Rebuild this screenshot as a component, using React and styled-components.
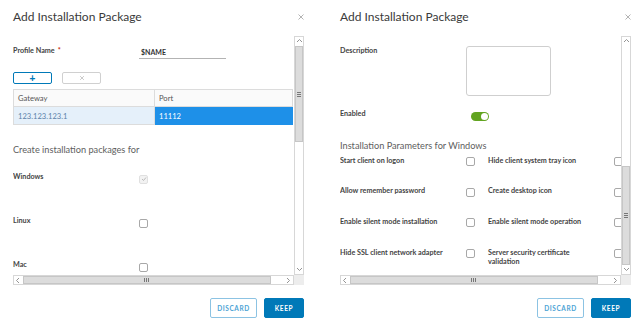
import React from 'react';
import styled, { createGlobalStyle } from 'styled-components';

const GlobalStyle = createGlobalStyle`
  body {
    margin: 0;
    background: #fff;
    font-family: Lato, "Open Sans", sans-serif;
    color: #333;
    overflow: hidden;
  }
`;

const Page = styled.div`
  display: flex;
  gap: 10px;
  width: max-content;
`;

const Dialog = styled.section`
  width: 291px;
  padding: 0 13px;
  display: flex;
  flex-direction: column;
`;

const Header = styled.header`
  height: 33px;
  padding-bottom: 3px;
  display: flex;
  align-items: center;
  justify-content: space-between;
`;

const Title = styled.h3`
  margin: 0;
  font-size: 12px;
  font-weight: 400;
  color: #3a3a3a;
  line-height: 14px;
`;

const Close = styled.button`
  border: 0;
  background: none;
  padding: 0;
  margin-right: -1px;
  width: 8px;
  height: 8px;
  display: flex;
  color: #aaa;
`;

const Frame = styled.div`
  display: grid;
  grid-template-columns: 281px 10px;
  grid-template-rows: 239px 10px;
`;

const Viewport = styled.div`
  overflow: hidden;
  position: relative;
`;

const Content = styled.div`
  padding-top: 10px;
  width: ${(p) => p.$width || 'auto'};
`;

const Bar = styled.div`
  display: flex;
  flex-direction: ${(p) => (p.$vertical ? 'column' : 'row')};
  background: #fff;
  border: 1px solid #d7d7d7;
  box-sizing: border-box;
`;

const Arrow = styled.div`
  flex: none;
  width: ${(p) => (p.$vertical ? '100%' : '9px')};
  height: ${(p) => (p.$vertical ? '9px' : '100%')};
  display: flex;
  align-items: center;
  justify-content: center;
  color: #888;
  background: #fff;
`;

const Track = styled.div`
  flex: 1;
  position: relative;
`;

const Thumb = styled.div`
  position: absolute;
  background: #dcdcdc;
  border: 1px solid #c6c6c6;
  box-sizing: border-box;
  display: flex;
  align-items: center;
  justify-content: center;
  ${(p) => (p.$vertical ? 'left: 0; right: 0;' : 'top: 0; bottom: 0;')}
`;

const Grip = styled.div`
  width: ${(p) => (p.$vertical ? '4px' : '1px')};
  height: ${(p) => (p.$vertical ? '1px' : '4px')};
  background: #777;
  box-shadow: ${(p) =>
    p.$vertical ? '0 2px 0 #777, 0 -2px 0 #777' : '2px 0 0 #777, -2px 0 0 #777'};
`;

const Corner = styled.div`
  background: #ededed;
`;

const Footer = styled.footer`
  display: flex;
  justify-content: flex-end;
  gap: 7px;
  margin-top: 13px;
`;

const Button = styled.button`
  height: 20px;
  min-width: ${(p) => (p.$primary ? '40px' : '47px')};
  padding: 0 5px;
  box-sizing: border-box;
  border-radius: 2px;
  border: 1px solid ${(p) => (p.$primary ? '#0079b8' : '#8cc3e3')};
  background: ${(p) => (p.$primary ? '#0079b8' : '#fff')};
  color: ${(p) => (p.$primary ? '#fff' : '#4da3d5')};
  font-family: inherit;
  font-size: 6.5px;
  font-weight: 700;
  letter-spacing: 0.6px;
`;

const FieldRow = styled.div`
  display: grid;
  grid-template-columns: 126px 1fr;
  align-items: start;
`;

const Label = styled.label`
  font-size: 7.2px;
  font-weight: 700;
  line-height: 9px;
  color: #444;
  max-width: ${(p) => p.$max || 'none'};
`;

const Required = styled.span`
  color: #c92100;
  margin-left: 3px;
`;

const TextInput = styled.div`
  width: 87px;
  height: 13px;
  border-bottom: 1px solid #b3b3b3;
  font-size: 7px;
  font-weight: 700;
  line-height: 13px;
  padding-left: 2px;
  box-sizing: border-box;
  color: #333;
`;

const Actions = styled.div`
  display: flex;
  gap: 10px;
  margin-top: 13px;
`;

const SmallButton = styled.button`
  width: 39px;
  height: 12px;
  padding: 0;
  border-radius: 2px;
  background: #fff;
  border: 1px solid ${(p) => (p.$accent ? '#0079b8' : '#d0d0d0')};
  color: ${(p) => (p.$accent ? '#0079b8' : '#b0b0b0')};
  font-size: 10px;
  font-weight: 700;
  line-height: 9px;
  display: flex;
  align-items: center;
  justify-content: center;
`;

const Table = styled.table`
  margin-top: 5px;
  width: 280px;
  border-collapse: collapse;
  font-size: 7.6px;
  table-layout: fixed;
`;

const Th = styled.th`
  height: 17px;
  padding: 0 4px;
  text-align: left;
  font-weight: 400;
  color: #555;
  background: #fafafa;
  border: 1px solid #dcdcdc;
  box-sizing: border-box;
`;

const Td = styled.td`
  height: 18px;
  padding: 0 4px;
  box-sizing: border-box;
  border: 1px solid ${(p) => (p.$active ? '#1e90e8' : '#dcdcdc')};
  background: ${(p) => (p.$active ? '#1e90e8' : '#e5f0fa')};
  color: ${(p) => (p.$active ? '#fff' : '#5a7fa8')};
`;

const Section = styled.h4`
  margin: ${(p) => p.$margin};
  font-size: 9.2px;
  font-weight: 400;
  line-height: 11px;
  color: #5e5e5e;
`;

const OsRow = styled.div`
  display: grid;
  grid-template-columns: 126px 9px;
  height: 44px;
  align-items: start;
`;

const Box = styled.span`
  display: flex;
  align-items: center;
  justify-content: center;
  width: 9px;
  height: 9px;
  box-sizing: border-box;
  margin-top: ${(p) => p.$top || '2.5px'};
  border-radius: 2px;
  border: 1px solid ${(p) => (p.$disabled ? '#e0e0e0' : '#a8a8a8')};
  background: ${(p) => (p.$disabled ? '#f2f2f2' : '#fff')};
`;

const TextArea = styled.div`
  width: 85px;
  height: 50px;
  box-sizing: border-box;
  border: 1px solid #cfcfcf;
  border-radius: 3px;
`;

const Switch = styled.span`
  margin: 2.5px 0 0 5px;
  width: 18px;
  height: 9px;
  border-radius: 5px;
  background: #62a420;
  display: flex;
  align-items: center;
  justify-content: flex-end;
  padding: 0 1px;
  box-sizing: border-box;
`;

const Knob = styled.span`
  width: 7px;
  height: 7px;
  border-radius: 50%;
  background: #fff;
`;

const ParamGrid = styled.div`
  margin-top: 5px;
  display: grid;
  grid-template-columns: 126px 22px 126px 22px;
  grid-auto-rows: 30.7px;
  align-items: start;
`;

const Chevron = ({ dir }) => {
  const pts = {
    up: '1,4 3.5,1.5 6,4',
    down: '1,2 3.5,4.5 6,2',
    left: '4,1 1.5,3.5 4,6',
    right: '2,1 4.5,3.5 2,6',
  }[dir];
  return (
    <svg width="7" height="7" viewBox="0 0 7 7">
      <polyline points={pts} fill="none" stroke="currentColor" strokeWidth="0.9" />
    </svg>
  );
};

const Scrollbar = ({ vertical, start, size }) => (
  <Bar $vertical={vertical}>
    <Arrow $vertical={vertical}>
      <Chevron dir={vertical ? 'up' : 'left'} />
    </Arrow>
    <Track>
      <Thumb
        $vertical={vertical}
        style={vertical ? { top: `${start}%`, height: `${size}%` } : { left: `${start}%`, width: `${size}%` }}
      >
        <Grip $vertical={vertical} />
      </Thumb>
    </Track>
    <Arrow $vertical={vertical}>
      <Chevron dir={vertical ? 'down' : 'right'} />
    </Arrow>
  </Bar>
);

const Checkbox = ({ checked, disabled, top }) => (
  <Box $disabled={disabled} $top={top}>
    {checked && (
      <svg width="6" height="6" viewBox="0 0 6 6">
        <polyline points="1,3 2.5,4.5 5,1.5" fill="none" stroke="#bbb" strokeWidth="1" />
      </svg>
    )}
  </Box>
);

const CloseIcon = ({ size = 8 }) => (
  <svg width={size} height={size} viewBox="0 0 8 8">
    <path d="M1.5 1.5 L6.5 6.5 M6.5 1.5 L1.5 6.5" stroke="currentColor" strokeWidth="0.9" />
  </svg>
);

const Modal = ({ children, vScroll, hScroll }) => (
  <Dialog>
    <Header>
      <Title>Add Installation Package</Title>
      <Close aria-label="Close">
        <CloseIcon />
      </Close>
    </Header>
    <Frame>
      <Viewport>{children}</Viewport>
      <Scrollbar vertical start={vScroll[0]} size={vScroll[1]} />
      <Scrollbar start={hScroll[0]} size={hScroll[1]} />
      <Corner />
    </Frame>
    <Footer>
      <Button>DISCARD</Button>
      <Button $primary>KEEP</Button>
    </Footer>
  </Dialog>
);

const osList = [
  { name: 'Windows', checked: true, disabled: true },
  { name: 'Linux' },
  { name: 'Mac' },
];

const params = [
  ['Start client on logon', 'Hide client system tray icon'],
  ['Allow remember password', 'Create desktop icon'],
  ['Enable silent mode installation', 'Enable silent mode operation'],
  ['Hide SSL client network adapter', 'Server security certificate validation'],
];

const App = () => (
  <>
    <GlobalStyle />
    <Page>
      <Modal vScroll={[0, 44]} hScroll={[0, 95]}>
        <Content>
          <FieldRow>
            <Label>
              Profile Name<Required>*</Required>
            </Label>
            <TextInput>$NAME</TextInput>
          </FieldRow>
          <Actions>
            <SmallButton $accent>+</SmallButton>
            <SmallButton aria-label="Remove">
              <CloseIcon size={6} />
            </SmallButton>
          </Actions>
          <Table>
            <colgroup>
              <col style={{ width: 141 }} />
              <col />
            </colgroup>
            <thead>
              <tr>
                <Th>Gateway</Th>
                <Th>Port</Th>
              </tr>
            </thead>
            <tbody>
              <tr>
                <Td>123.123.123.1</Td>
                <Td $active>11112</Td>
              </tr>
            </tbody>
          </Table>
          <Section $margin="19px 0 17px">Create installation packages for</Section>
          {osList.map((os) => (
            <OsRow key={os.name}>
              <Label>{os.name}</Label>
              <Checkbox checked={os.checked} disabled={os.disabled} />
            </OsRow>
          ))}
        </Content>
      </Modal>
      <Modal vScroll={[55, 45]} hScroll={[0, 95]}>
        <Content $width="300px">
          <FieldRow>
            <Label>Description</Label>
            <TextArea />
          </FieldRow>
          <FieldRow style={{ marginTop: 13 }}>
            <Label>Enabled</Label>
            <Switch>
              <Knob />
            </Switch>
          </FieldRow>
          <Section $margin="19px 0 0">Installation Parameters for Windows</Section>
          <ParamGrid>
            {params.flat().map((p) => (
              <React.Fragment key={p}>
                <Label $max="110px">{p}</Label>
                <Checkbox top="1.5px" />
              </React.Fragment>
            ))}
          </ParamGrid>
        </Content>
      </Modal>
    </Page>
  </>
);

export default App;
